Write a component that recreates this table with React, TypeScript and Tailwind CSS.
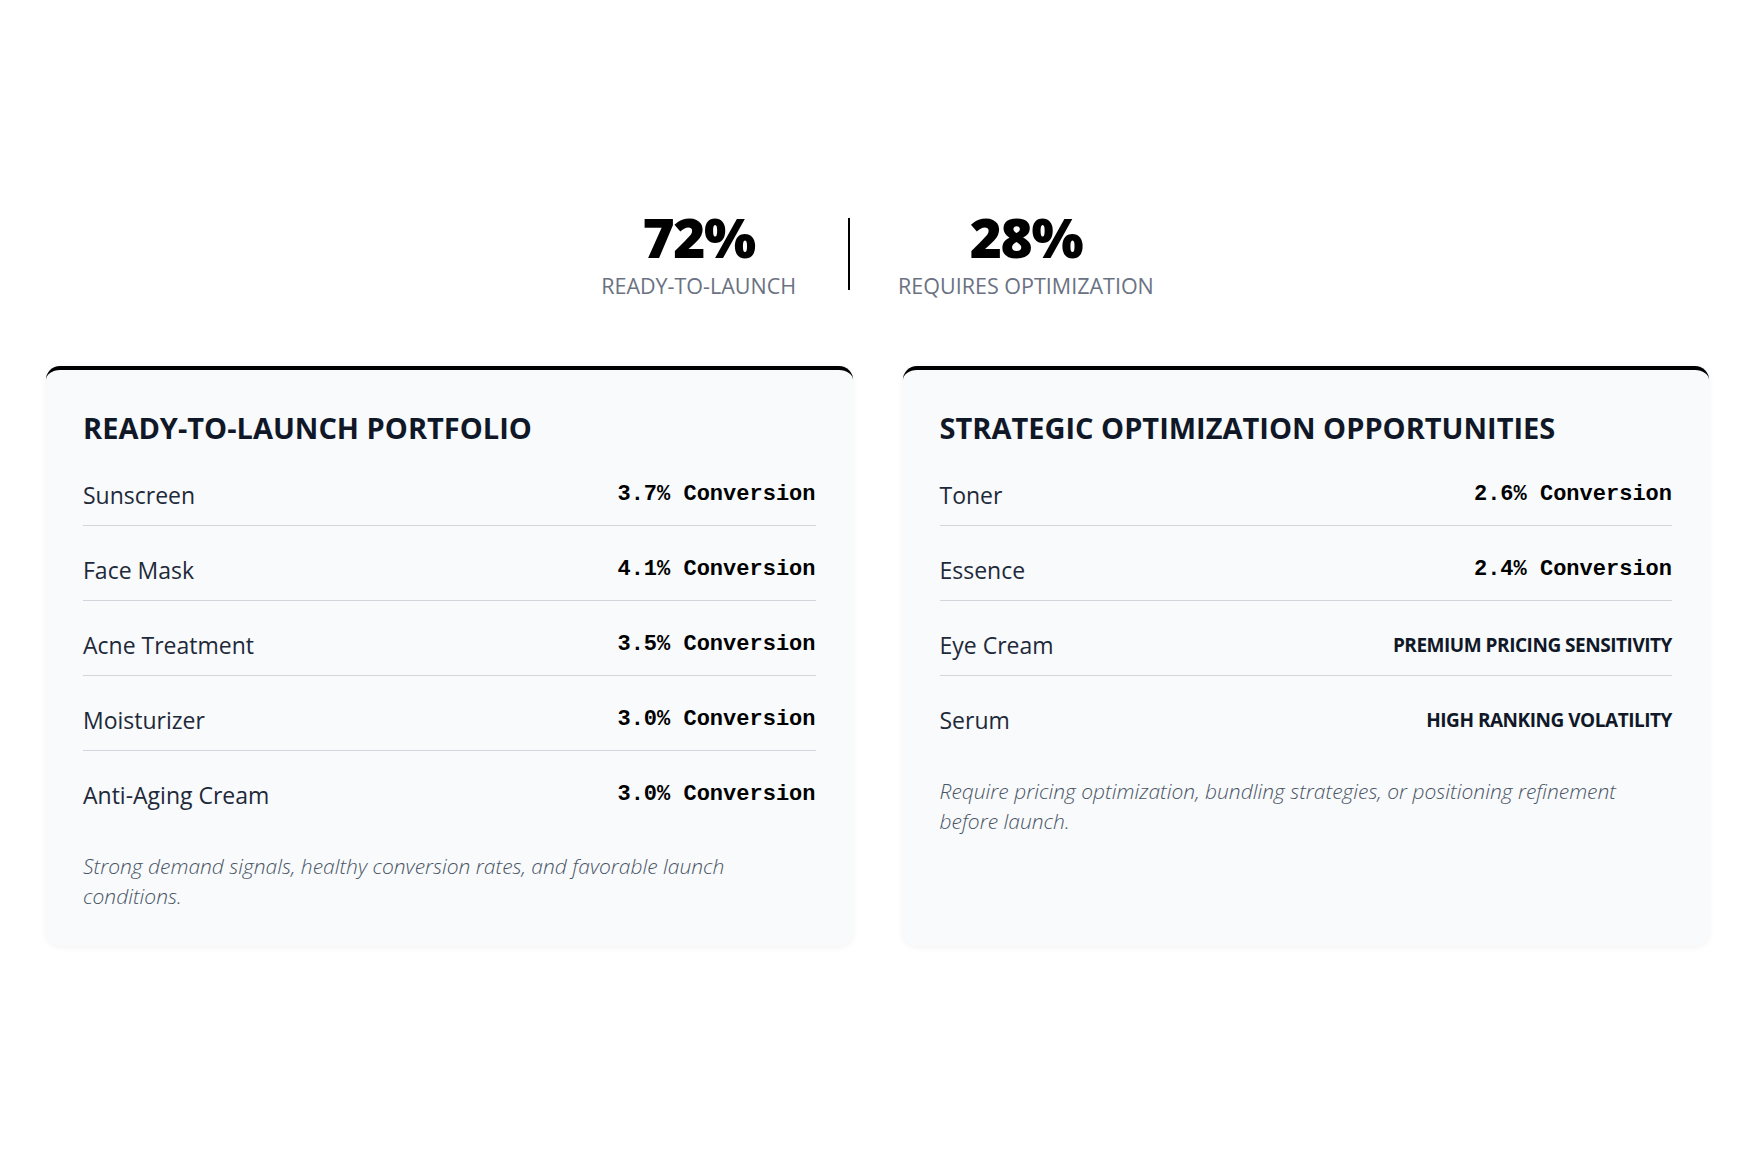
const launchReady = [
  { name: "Sunscreen", value: "3.7% Conversion" },
  { name: "Face Mask", value: "4.1% Conversion" },
  { name: "Acne Treatment", value: "3.5% Conversion" },
  { name: "Moisturizer", value: "3.0% Conversion" },
  { name: "Anti-Aging Cream", value: "3.0% Conversion" },
];

const needsWork = [
  { name: "Toner", value: "2.6% Conversion" },
  { name: "Essence", value: "2.4% Conversion" },
  { name: "Eye Cream", value: "Premium Pricing Sensitivity", flag: true },
  { name: "Serum", value: "High Ranking Volatility", flag: true },
];

type Item = { name: string; value: string; flag?: boolean };

function Stat({ value, label }: { value: string; label: string }) {
  return (
    <div className="flex flex-col items-center">
      <div className="text-[55px] leading-[68px] font-extrabold text-black tracking-tight">{value}</div>
      <div className="text-[21.5px] leading-[30px] uppercase text-gray-500">{label}</div>
    </div>
  );
}

function Card({ title, items, note }: { title: string; items: Item[]; note: string }) {
  return (
    <div className="rounded-[14px] border-t-4 border-black bg-slate-50 px-[37px] pt-[41px] pb-[35px] shadow-[0_1px_6px_rgba(0,0,0,0.06)]">
      <h2 className="mb-[6px] text-[29px] leading-[34px] font-bold uppercase text-gray-900">
        {title}
      </h2>
      <div>
        {items.map((it) => (
          <div
            key={it.name}
            className="flex items-center justify-between pt-[29px] pb-[15px] border-b border-gray-300 last:border-b-0"
          >
            <span className="text-[23px] leading-[30px] text-gray-800">{it.name}</span>
            {it.flag ? (
              <span className="text-[19px] leading-[30px] font-bold uppercase tracking-tight text-gray-900">
                {it.value}
              </span>
            ) : (
              <span className="font-['Liberation_Mono',monospace] text-[22px] leading-[30px] font-bold text-black">
                {it.value}
              </span>
            )}
          </div>
        ))}
      </div>
      <p className="mt-[26px] text-[21px] leading-[30px] italic font-light text-gray-600">{note}</p>
    </div>
  );
}

export default function App() {
  return (
    <div className="min-h-screen bg-white pt-[203px] pl-[46px] pr-[50px] font-['Open_Sans',sans-serif]">
      <div className="flex items-center justify-center mb-[65px]">
        <Stat value="72%" label="Ready-to-Launch" />
        <div className="mt-[4px] ml-[52px] mr-[48px] w-[2px] h-[72px] bg-black" />
        <Stat value="28%" label="Requires Optimization" />
      </div>

      <div className="grid grid-cols-2 gap-[50px]">
        <Card
          title="Ready-to-Launch Portfolio"
          items={launchReady}
          note="Strong demand signals, healthy conversion rates, and favorable launch conditions."
        />
        <Card
          title="Strategic Optimization Opportunities"
          items={needsWork}
          note="Require pricing optimization, bundling strategies, or positioning refinement before launch."
        />
      </div>
    </div>
  );
}
